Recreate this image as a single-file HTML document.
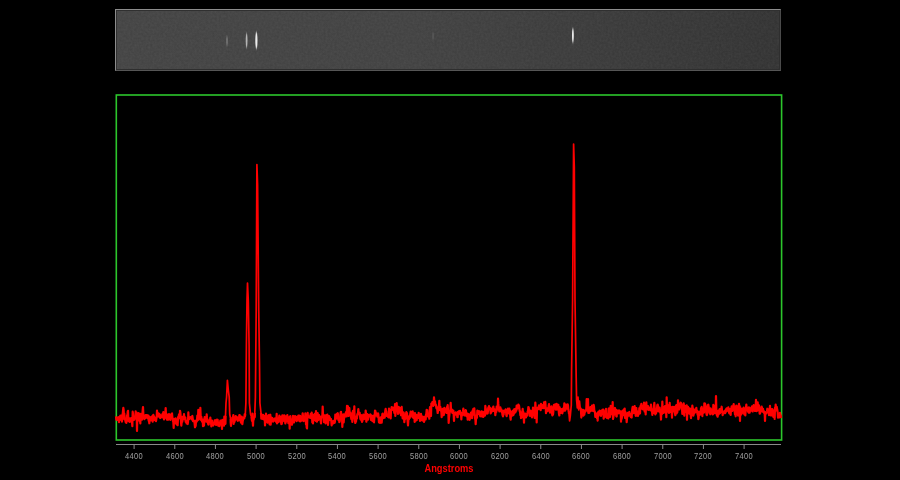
<!DOCTYPE html>
<html><head><meta charset="utf-8"><style>
html,body{margin:0;padding:0;background:#000;width:900px;height:480px;overflow:hidden;}
#strip{position:absolute;left:115px;top:9px;width:666px;height:62px;box-sizing:border-box;
 border-top:1px solid #8c8c8c;border-left:1px solid #8c8c8c;border-right:1px solid #4a4a4a;border-bottom:1px solid #555;
 background:linear-gradient(to right,#414141 0%,#3f3f3f 45%,#373737 75%,#303030 100%);}
#strip .in{position:absolute;left:0;top:0;right:0;bottom:0;border-top:1px solid #303030;border-left:1px solid #303030;border-bottom:1px solid #2e2e2e;border-right:1px solid #2e2e2e;z-index:2;}
.sp{position:absolute;border-radius:50%;background:#fff;filter:blur(0.9px);}
svg{position:absolute;left:0;top:0;}
.lb{position:absolute;top:450.6px;width:40px;text-align:center;font-family:"Liberation Sans",sans-serif;font-size:9.4px;transform:scaleX(0.80);letter-spacing:0.35px;color:#a0a0a0;line-height:10px;}
#ang{position:absolute;left:398.5px;top:462.5px;transform:scaleX(0.93);width:100px;text-align:center;font-family:"Liberation Sans",sans-serif;font-weight:bold;font-size:10px;color:#f00;line-height:12px;}
</style></head><body>
<div id="strip"><div class="in"></div>
<svg width="666" height="62" style="position:absolute;left:-1px;top:-1px">
<defs><filter id="bl" x="-3" y="-1" width="7" height="3"><feGaussianBlur stdDeviation="0.7 1.3"/></filter>
<filter id="nz" x="0" y="0" width="1" height="1"><feTurbulence type="fractalNoise" baseFrequency="0.45" numOctaves="2" seed="3"/><feColorMatrix values="0 0 0 0 1  0 0 0 0 1  0 0 0 0 1  1 0 0 0 0"/></filter></defs>
<rect x="2" y="2" width="662" height="58" filter="url(#nz)" opacity="0.07"/>
<g fill="#fff" filter="url(#bl)">
<ellipse cx="112" cy="32" rx="0.7" ry="5" opacity="0.3"/>
<ellipse cx="131.6" cy="31.5" rx="0.9" ry="7.5" opacity="0.6"/>
<ellipse cx="141.4" cy="31.5" rx="1.1" ry="8.5" opacity="0.9"/>
<ellipse cx="457.9" cy="26.5" rx="0.9" ry="7.5" opacity="0.9"/>
<ellipse cx="318" cy="27" rx="1" ry="4" opacity="0.08"/>
</g></svg>
</div>
<svg width="900" height="480" viewBox="0 0 900 480">
<rect x="116.3" y="95" width="665.3" height="345" fill="none" stroke="#2cc62c" stroke-width="1.6"/>
<g stroke="#8a8a8a" stroke-width="1">
<line x1="116" y1="444.5" x2="781" y2="444.5"/>
<line x1="134.10" y1="444.5" x2="134.10" y2="449" /><line x1="174.77" y1="444.5" x2="174.77" y2="449" /><line x1="215.43" y1="444.5" x2="215.43" y2="449" /><line x1="256.10" y1="444.5" x2="256.10" y2="449" /><line x1="296.77" y1="444.5" x2="296.77" y2="449" /><line x1="337.43" y1="444.5" x2="337.43" y2="449" /><line x1="378.10" y1="444.5" x2="378.10" y2="449" /><line x1="418.77" y1="444.5" x2="418.77" y2="449" /><line x1="459.43" y1="444.5" x2="459.43" y2="449" /><line x1="500.10" y1="444.5" x2="500.10" y2="449" /><line x1="540.77" y1="444.5" x2="540.77" y2="449" /><line x1="581.43" y1="444.5" x2="581.43" y2="449" /><line x1="622.10" y1="444.5" x2="622.10" y2="449" /><line x1="662.77" y1="444.5" x2="662.77" y2="449" /><line x1="703.43" y1="444.5" x2="703.43" y2="449" /><line x1="744.10" y1="444.5" x2="744.10" y2="449" />
</g>
<polyline points="116.00,416.38 116.33,419.64 116.67,419.36 117.00,419.65 117.33,419.91 117.67,419.92 118.00,417.49 118.33,417.22 118.67,418.55 119.00,422.20 119.33,417.17 119.67,418.56 120.00,416.56 120.33,415.56 120.67,416.63 121.00,419.84 121.33,419.79 121.67,418.49 122.00,421.56 122.33,414.49 122.67,414.47 123.00,410.94 123.33,407.79 123.67,410.13 124.00,418.67 124.33,413.61 124.67,419.48 125.00,418.35 125.33,420.22 125.67,422.11 126.00,419.13 126.33,422.81 126.67,420.73 127.00,415.37 127.33,418.84 127.67,411.90 128.00,410.75 128.33,419.08 128.67,421.13 129.00,417.97 129.33,418.27 129.67,421.96 130.00,420.97 130.33,419.79 130.67,418.31 131.00,421.28 131.33,420.20 131.67,417.92 132.00,422.43 132.33,426.15 132.67,411.68 133.00,413.56 133.33,417.53 133.67,417.55 134.00,419.79 134.33,419.71 134.67,418.64 135.00,418.21 135.33,417.27 135.67,411.23 136.00,416.30 136.33,416.77 136.67,412.61 137.00,431.00 137.33,417.03 137.67,417.54 138.00,419.11 138.33,419.80 138.67,413.06 139.00,415.44 139.33,419.76 139.67,421.24 140.00,416.88 140.33,423.49 140.67,413.89 141.00,418.35 141.33,417.31 141.67,415.02 142.00,419.63 142.33,414.68 142.67,410.49 143.00,407.07 143.33,414.09 143.67,415.26 144.00,416.45 144.33,419.16 144.67,416.52 145.00,418.38 145.33,417.19 145.67,415.14 146.00,415.44 146.33,416.81 146.67,415.10 147.00,415.08 147.33,418.13 147.67,415.27 148.00,416.81 148.33,415.57 148.67,420.72 149.00,420.82 149.33,423.28 149.67,416.81 150.00,417.23 150.33,419.93 150.67,420.32 151.00,417.25 151.33,418.10 151.67,416.94 152.00,416.30 152.33,420.13 152.67,421.61 153.00,416.25 153.33,414.86 153.67,418.20 154.00,416.28 154.33,418.31 154.67,420.03 155.00,419.45 155.33,419.09 155.67,418.12 156.00,421.19 156.33,419.16 156.67,416.94 157.00,410.50 157.33,414.35 157.67,416.40 158.00,413.13 158.33,416.34 158.67,415.51 159.00,415.63 159.33,413.84 159.67,417.36 160.00,414.74 160.33,418.03 160.67,417.72 161.00,416.34 161.33,415.77 161.67,415.89 162.00,416.13 162.33,414.11 162.67,417.48 163.00,415.06 163.33,412.03 163.67,415.56 164.00,419.33 164.33,419.02 164.67,414.61 165.00,417.91 165.33,412.91 165.67,408.02 166.00,415.67 166.33,417.58 166.67,414.05 167.00,419.75 167.33,414.76 167.67,419.44 168.00,419.73 168.33,419.36 168.67,415.38 169.00,414.03 169.33,414.56 169.67,415.53 170.00,414.72 170.33,419.96 170.67,414.55 171.00,415.38 171.33,418.19 171.67,413.80 172.00,413.43 172.33,416.86 172.67,418.98 173.00,421.35 173.33,422.23 173.67,427.86 174.00,419.53 174.33,418.91 174.67,419.98 175.00,418.75 175.33,422.14 175.67,418.27 176.00,423.60 176.33,422.53 176.67,420.19 177.00,424.64 177.33,423.90 177.67,425.22 178.00,417.94 178.33,416.58 178.67,418.34 179.00,414.37 179.33,417.76 179.67,418.10 180.00,410.74 180.33,412.32 180.67,415.99 181.00,422.32 181.33,425.54 181.67,422.13 182.00,421.25 182.33,421.63 182.67,416.87 183.00,418.97 183.33,419.24 183.67,418.18 184.00,414.22 184.33,417.79 184.67,419.08 185.00,417.27 185.33,417.41 185.67,421.84 186.00,421.68 186.33,421.55 186.67,423.51 187.00,420.83 187.33,423.72 187.67,423.98 188.00,422.30 188.33,412.44 188.67,418.16 189.00,419.25 189.33,418.83 189.67,417.40 190.00,418.09 190.33,417.17 190.67,418.01 191.00,417.27 191.33,417.23 191.67,419.33 192.00,417.04 192.33,415.97 192.67,418.09 193.00,421.15 193.33,420.32 193.67,420.77 194.00,421.45 194.33,420.91 194.67,423.98 195.00,427.27 195.33,425.46 195.67,425.85 196.00,420.67 196.33,421.79 196.67,421.52 197.00,420.83 197.33,415.69 197.67,420.28 198.00,418.72 198.33,409.74 198.67,419.56 199.00,419.16 199.33,418.04 199.67,417.01 200.00,417.67 200.33,407.80 200.67,416.04 201.00,420.03 201.33,416.89 201.67,420.10 202.00,421.58 202.33,419.42 202.67,419.57 203.00,426.27 203.33,420.00 203.67,425.87 204.00,425.38 204.33,420.67 204.67,417.21 205.00,420.49 205.33,421.13 205.67,417.46 206.00,418.67 206.33,421.71 206.67,414.44 207.00,417.90 207.33,420.21 207.67,422.13 208.00,423.21 208.33,424.46 208.67,424.63 209.00,420.58 209.33,421.62 209.67,419.64 210.00,421.16 210.33,417.68 210.67,421.37 211.00,421.88 211.33,426.48 211.67,422.72 212.00,420.51 212.33,423.95 212.67,424.41 213.00,425.47 213.33,425.56 213.67,424.36 214.00,422.61 214.33,423.86 214.67,420.41 215.00,420.92 215.33,420.19 215.67,422.70 216.00,424.91 216.33,424.85 216.67,422.75 217.00,419.63 217.33,422.49 217.67,419.93 218.00,424.37 218.33,425.66 218.67,425.02 219.00,422.80 219.33,426.24 219.67,424.72 220.00,424.10 220.33,420.70 220.67,423.36 221.00,423.90 221.33,422.61 221.67,421.92 222.00,429.00 222.33,419.90 222.67,420.83 223.00,420.88 223.33,422.94 223.67,421.68 224.00,425.77 224.33,416.52 224.67,416.87 225.00,419.12 225.33,423.87 225.50,416.00" fill="none" stroke="#ff0000" stroke-width="2.2" stroke-linejoin="round"/><polyline points="230.60,419.00 230.67,422.56 231.00,425.89 231.33,421.58 231.67,419.59 232.00,420.41 232.33,417.53 232.67,418.75 233.00,417.42 233.33,415.12 233.67,423.84 234.00,418.03 234.33,422.12 234.67,420.91 235.00,420.02 235.33,419.63 235.67,416.09 236.00,418.31 236.33,416.61 236.67,418.91 237.00,417.04 237.33,419.76 237.67,420.76 238.00,418.87 238.33,419.10 238.67,420.37 239.00,418.01 239.33,415.02 239.67,415.09 240.00,416.64 240.33,420.77 240.67,419.86 241.00,422.61 241.33,421.85 241.67,416.63 242.00,418.84 242.33,424.14 242.67,421.49 243.00,420.06 243.33,417.72 243.67,418.43 244.00,418.56 244.33,418.17 244.67,414.33 245.00,416.37 245.30,414.00" fill="none" stroke="#ff0000" stroke-width="2.2" stroke-linejoin="round"/><polyline points="251.50,417.00 251.67,418.68 252.00,420.93 252.33,413.69 252.67,421.12 253.00,425.70 253.33,418.60 253.67,419.74 254.00,417.10 254.33,417.02 254.67,417.24 254.80,413.00" fill="none" stroke="#ff0000" stroke-width="2.2" stroke-linejoin="round"/><polyline points="261.00,413.00 261.33,418.62 261.67,417.79 262.00,418.45 262.33,415.80 262.67,418.87 263.00,414.74 263.33,419.12 263.67,418.76 264.00,419.48 264.33,415.91 264.67,416.09 265.00,425.42 265.33,419.69 265.67,418.00 266.00,413.58 266.33,419.10 266.67,419.48 267.00,417.59 267.33,422.54 267.67,422.67 268.00,421.23 268.33,415.64 268.67,415.08 269.00,416.98 269.33,419.24 269.67,424.33 270.00,417.09 270.33,414.73 270.67,424.73 271.00,419.83 271.33,417.22 271.67,418.82 272.00,419.26 272.33,418.14 272.67,420.90 273.00,421.65 273.33,419.43 273.67,420.91 274.00,419.07 274.33,420.26 274.67,418.60 275.00,418.44 275.33,418.92 275.67,421.44 276.00,421.67 276.33,422.01 276.67,413.83 277.00,423.45 277.33,418.71 277.67,419.46 278.00,421.89 278.33,422.16 278.67,421.87 279.00,417.80 279.33,415.59 279.67,418.38 280.00,420.64 280.33,416.58 280.67,419.39 281.00,421.69 281.33,424.11 281.67,423.95 282.00,422.70 282.33,415.31 282.67,419.62 283.00,416.78 283.33,415.65 283.67,417.16 284.00,420.87 284.33,415.36 284.67,421.52 285.00,418.51 285.33,423.45 285.67,421.38 286.00,421.83 286.33,416.14 286.67,418.75 287.00,418.89 287.33,415.09 287.67,420.75 288.00,418.28 288.33,423.21 288.67,420.38 289.00,419.30 289.33,417.09 289.67,428.68 290.00,416.50 290.33,416.09 290.67,421.95 291.00,422.10 291.33,421.32 291.67,424.30 292.00,424.72 292.33,419.37 292.67,420.35 293.00,415.74 293.33,420.03 293.67,419.95 294.00,422.50 294.33,417.99 294.67,418.96 295.00,415.99 295.33,419.05 295.67,420.24 296.00,419.40 296.33,416.74 296.67,421.05 297.00,420.65 297.33,418.18 297.67,416.73 298.00,418.09 298.33,415.69 298.67,416.21 299.00,415.58 299.33,421.04 299.67,418.96 300.00,415.74 300.33,421.36 300.67,419.29 301.00,420.70 301.33,416.66 301.67,420.57 302.00,416.62 302.33,416.66 302.67,413.23 303.00,416.04 303.33,420.30 303.67,421.07 304.00,419.44 304.33,417.61 304.67,418.55 305.00,419.48 305.33,413.37 305.67,418.09 306.00,424.52 306.33,420.00 306.67,427.46 307.00,428.46 307.33,418.14 307.67,412.73 308.00,417.28 308.33,417.05 308.67,416.25 309.00,416.64 309.33,417.30 309.67,417.56 310.00,417.00 310.33,416.01 310.67,413.87 311.00,418.25 311.33,415.16 311.67,412.54 312.00,415.22 312.33,422.46 312.67,420.52 313.00,423.31 313.33,418.93 313.67,414.93 314.00,419.34 314.33,419.86 314.67,413.90 315.00,419.82 315.33,420.20 315.67,420.83 316.00,411.15 316.33,416.69 316.67,420.46 317.00,421.70 317.33,419.19 317.67,413.07 318.00,417.02 318.33,420.00 318.67,415.90 319.00,415.12 319.33,419.17 319.67,416.56 320.00,416.89 320.33,417.33 320.67,420.66 321.00,423.39 321.33,416.41 321.67,416.72 322.00,416.83 322.33,416.50 322.67,406.48 323.00,414.61 323.33,417.24 323.67,418.45 324.00,422.05 324.33,417.96 324.67,415.32 325.00,421.97 325.33,420.28 325.67,423.36 326.00,419.74 326.33,415.12 326.67,417.09 327.00,416.01 327.33,414.65 327.67,418.16 328.00,424.96 328.33,421.55 328.67,417.62 329.00,416.12 329.33,419.80 329.67,417.17 330.00,418.67 330.33,419.32 330.67,419.99 331.00,418.99 331.33,421.63 331.67,425.28 332.00,423.00 332.33,421.34 332.67,422.18 333.00,423.50 333.33,423.28 333.67,420.76 334.00,421.29 334.33,421.68 334.67,422.77 335.00,421.00 335.33,414.61 335.67,415.26 336.00,417.21 336.33,418.65 336.67,416.24 337.00,413.85 337.33,413.58 337.67,413.18 338.00,414.30 338.33,419.99 338.67,418.34 339.00,418.35 339.33,422.05 339.67,421.54 340.00,419.07 340.33,417.64 340.67,412.18 341.00,411.84 341.33,415.88 341.67,416.01 342.00,415.82 342.33,426.85 342.67,419.95 343.00,421.34 343.33,414.47 343.67,422.35 344.00,418.68 344.33,417.00 344.67,417.02 345.00,415.10 345.33,413.79 345.67,413.72 346.00,412.09 346.33,412.26 346.67,416.45 347.00,405.84 347.33,409.20 347.67,412.60 348.00,406.25 348.33,415.37 348.67,415.88 349.00,409.96 349.33,408.07 349.67,412.86 350.00,412.70 350.33,412.69 350.67,414.02 351.00,417.30 351.33,419.07 351.67,417.38 352.00,416.49 352.33,421.90 352.67,412.25 353.00,410.77 353.33,412.69 353.67,412.15 354.00,414.31 354.33,406.23 354.67,418.74 355.00,420.85 355.33,422.97 355.67,418.70 356.00,421.67 356.33,418.00 356.67,416.25 357.00,418.45 357.33,414.06 357.67,414.89 358.00,412.82 358.33,409.22 358.67,412.77 359.00,413.16 359.33,413.90 359.67,412.81 360.00,415.72 360.33,418.82 360.67,419.51 361.00,415.89 361.33,415.19 361.67,419.85 362.00,421.84 362.33,421.27 362.67,416.71 363.00,416.80 363.33,414.60 363.67,415.35 364.00,419.08 364.33,417.00 364.67,418.59 365.00,416.82 365.33,416.33 365.67,410.64 366.00,413.03 366.33,421.73 366.67,419.43 367.00,414.03 367.33,414.02 367.67,418.85 368.00,419.73 368.33,417.22 368.67,416.89 369.00,415.22 369.33,416.47 369.67,415.03 370.00,416.35 370.33,414.39 370.67,414.88 371.00,419.99 371.33,419.86 371.67,415.62 372.00,416.79 372.33,420.97 372.67,421.21 373.00,419.12 373.33,420.11 373.67,415.49 374.00,422.32 374.33,417.85 374.67,416.62 375.00,410.72 375.33,410.97 375.67,412.41 376.00,415.37 376.33,415.29 376.67,415.48 377.00,413.77 377.33,416.61 377.67,415.62 378.00,413.27 378.33,414.29 378.67,418.79 379.00,422.36 379.33,421.03 379.67,420.45 380.00,422.80 380.33,418.31 380.67,417.35 381.00,421.93 381.33,420.10 381.67,422.68 382.00,418.59 382.33,414.14 382.67,413.55 383.00,414.88 383.33,418.07 383.67,415.24 384.00,415.64 384.33,416.18 384.67,417.68 385.00,413.77 385.33,410.40 385.67,408.81 386.00,411.38 386.33,411.30 386.67,415.90 387.00,415.29 387.33,414.98 387.67,416.22 388.00,416.85 388.33,414.42 388.67,417.36 389.00,408.65 389.33,411.24 389.67,411.32 390.00,410.09 390.33,412.40 390.67,418.43 391.00,411.37 391.33,409.63 391.67,407.18 392.00,410.11 392.33,409.74 392.67,409.10 393.00,407.62 393.33,407.88 393.67,409.48 394.00,410.32 394.33,412.81 394.67,412.69 395.00,404.00 395.33,416.00 395.67,411.52 396.00,409.00 396.33,406.20 396.67,403.09 397.00,409.03 397.33,410.51 397.67,407.90 398.00,413.97 398.33,412.94 398.67,406.75 399.00,408.83 399.33,411.38 399.67,412.17 400.00,408.08 400.33,412.60 400.67,413.69 401.00,415.25 401.33,409.59 401.67,406.92 402.00,411.89 402.33,415.14 402.67,418.34 403.00,417.28 403.33,412.33 403.67,412.55 404.00,415.67 404.33,422.19 404.67,418.81 405.00,416.96 405.33,418.82 405.67,416.38 406.00,413.89 406.33,412.18 406.67,415.06 407.00,413.14 407.33,416.47 407.67,421.73 408.00,425.33 408.33,420.93 408.67,416.69 409.00,419.12 409.33,416.86 409.67,418.09 410.00,416.01 410.33,413.70 410.67,411.58 411.00,415.12 411.33,414.42 411.67,415.33 412.00,415.89 412.33,416.77 412.67,411.43 413.00,415.36 413.33,417.89 413.67,413.15 414.00,414.82 414.33,413.75 414.67,421.94 415.00,413.17 415.33,415.87 415.67,420.67 416.00,416.68 416.33,414.97 416.67,420.11 417.00,415.11 417.33,415.57 417.67,417.26 418.00,418.05 418.33,417.11 418.67,412.95 419.00,415.95 419.33,417.51 419.67,416.93 420.00,420.95 420.33,417.71 420.67,420.27 421.00,413.87 421.33,417.55 421.67,416.56 422.00,420.05 422.33,419.52 422.67,416.66 423.00,420.68 423.33,416.82 423.67,420.56 424.00,421.82 424.33,420.93 424.67,418.77 425.00,417.73 425.33,416.30 425.67,419.32 426.00,414.69 426.33,413.74 426.67,409.89 427.00,410.94 427.33,410.23 427.67,415.61 428.00,416.45 428.33,415.58 428.67,417.08 429.00,415.86 429.33,418.76 429.67,413.66 430.00,407.07 430.33,415.22 430.67,414.16 431.00,415.88 431.33,403.53 431.67,404.55 432.00,404.05 432.33,402.19 432.67,404.55 433.00,402.13 433.33,405.85 433.67,402.90 434.00,397.26 434.33,401.64 434.67,402.68 435.00,401.36 435.33,404.88 435.67,404.38 436.00,405.34 436.33,407.81 436.67,408.74 437.00,407.23 437.33,410.23 437.67,413.00 438.00,411.05 438.33,408.02 438.67,407.48 439.00,404.76 439.33,400.76 439.67,408.98 440.00,410.16 440.33,406.89 440.67,408.83 441.00,410.35 441.33,411.95 441.67,417.22 442.00,414.04 442.33,413.73 442.67,408.82 443.00,410.89 443.33,412.09 443.67,415.19 444.00,413.88 444.33,407.84 444.67,408.38 445.00,409.86 445.33,412.18 445.67,409.76 446.00,409.52 446.33,412.15 446.67,412.98 447.00,407.06 447.33,408.02 447.67,405.19 448.00,410.35 448.33,412.18 448.67,422.96 449.00,417.80 449.33,415.28 449.67,412.49 450.00,411.36 450.33,409.75 450.67,402.78 451.00,409.66 451.33,411.35 451.67,409.77 452.00,409.67 452.33,412.85 452.67,412.35 453.00,410.63 453.33,410.57 453.67,414.63 454.00,420.88 454.33,414.37 454.67,415.45 455.00,414.31 455.33,412.83 455.67,412.29 456.00,414.09 456.33,413.16 456.67,414.08 457.00,413.85 457.33,417.23 457.67,417.20 458.00,411.77 458.33,413.98 458.67,411.34 459.00,412.70 459.33,410.99 459.67,412.55 460.00,410.82 460.33,414.52 460.67,412.35 461.00,412.90 461.33,419.37 461.67,413.90 462.00,415.63 462.33,414.65 462.67,413.03 463.00,411.49 463.33,408.53 463.67,412.61 464.00,412.78 464.33,415.36 464.67,412.53 465.00,415.43 465.33,412.93 465.67,410.13 466.00,410.71 466.33,415.76 466.67,416.12 467.00,415.60 467.33,413.72 467.67,419.65 468.00,413.76 468.33,416.91 468.67,416.85 469.00,419.27 469.33,419.52 469.67,419.73 470.00,416.97 470.33,413.93 470.67,415.66 471.00,412.60 471.33,414.41 471.67,416.42 472.00,418.11 472.33,411.95 472.67,410.47 473.00,411.40 473.33,408.90 473.67,413.08 474.00,414.73 474.33,408.35 474.67,413.60 475.00,418.91 475.33,418.21 475.67,424.12 476.00,419.11 476.33,418.68 476.67,415.62 477.00,417.76 477.33,410.48 477.67,413.91 478.00,414.16 478.33,413.77 478.67,413.88 479.00,411.21 479.33,412.47 479.67,413.46 480.00,415.36 480.33,416.28 480.67,416.18 481.00,414.51 481.33,411.37 481.67,411.37 482.00,413.08 482.33,416.71 482.67,414.59 483.00,411.88 483.33,416.93 483.67,414.60 484.00,413.83 484.33,415.45 484.67,412.17 485.00,415.58 485.33,405.87 485.67,408.38 486.00,412.14 486.33,411.73 486.67,409.54 487.00,413.66 487.33,410.27 487.67,413.34 488.00,410.86 488.33,407.44 488.67,409.20 489.00,406.12 489.33,407.45 489.67,407.86 490.00,407.79 490.33,409.15 490.67,413.40 491.00,412.61 491.33,409.40 491.67,409.53 492.00,411.46 492.33,409.15 492.67,407.90 493.00,407.80 493.33,406.56 493.67,410.88 494.00,410.15 494.33,409.98 494.67,409.50 495.00,410.41 495.33,415.15 495.67,411.85 496.00,410.91 496.33,411.98 496.67,406.55 497.00,408.88 497.33,409.70 497.67,409.47 498.00,398.69 498.33,403.91 498.67,407.44 499.00,409.56 499.33,411.35 499.67,409.91 500.00,411.04 500.33,407.24 500.67,409.40 501.00,410.66 501.33,409.20 501.67,412.14 502.00,410.56 502.33,414.11 502.67,415.49 503.00,416.39 503.33,414.38 503.67,414.30 504.00,410.49 504.33,411.71 504.67,411.54 505.00,411.30 505.33,411.33 505.67,409.32 506.00,410.86 506.33,415.24 506.67,416.23 507.00,411.72 507.33,411.35 507.67,412.37 508.00,408.60 508.33,408.91 508.67,411.89 509.00,413.21 509.33,408.56 509.67,414.29 510.00,410.39 510.33,417.23 510.67,419.61 511.00,413.85 511.33,411.74 511.67,416.04 512.00,413.71 512.33,411.54 512.67,413.70 513.00,410.63 513.33,415.03 513.67,412.00 514.00,413.70 514.33,409.13 514.67,409.44 515.00,410.39 515.33,412.43 515.67,410.91 516.00,408.53 516.33,410.65 516.67,405.68 517.00,407.24 517.33,408.76 517.67,407.67 518.00,406.86 518.33,404.60 518.67,407.46 519.00,405.32 519.33,407.85 519.67,411.02 520.00,411.08 520.33,415.06 520.67,412.27 521.00,418.08 521.33,417.73 521.67,417.72 522.00,414.71 522.33,412.01 522.67,408.92 523.00,414.24 523.33,412.00 523.67,414.67 524.00,422.66 524.33,414.40 524.67,415.37 525.00,417.01 525.33,413.61 525.67,414.90 526.00,417.42 526.33,415.42 526.67,413.90 527.00,414.07 527.33,415.54 527.67,411.25 528.00,411.45 528.33,406.98 528.67,407.48 529.00,409.51 529.33,411.94 529.67,412.38 530.00,415.96 530.33,411.05 530.67,410.57 531.00,411.43 531.33,412.87 531.67,412.91 532.00,417.30 532.33,414.53 532.67,413.35 533.00,407.62 533.33,414.36 533.67,412.63 534.00,413.53 534.33,414.77 534.67,417.95 535.00,412.86 535.33,402.67 535.67,407.10 536.00,407.92 536.33,408.78 536.67,422.35 537.00,409.06 537.33,408.21 537.67,408.58 538.00,409.30 538.33,407.12 538.67,408.20 539.00,405.40 539.33,407.43 539.67,408.01 540.00,409.16 540.33,406.20 540.67,410.10 541.00,403.79 541.33,407.07 541.67,405.41 542.00,408.06 542.33,405.84 542.67,405.11 543.00,405.82 543.33,406.23 543.67,408.11 544.00,402.34 544.33,407.29 544.67,403.53 545.00,406.38 545.33,401.95 545.67,407.44 546.00,413.23 546.33,409.15 546.67,410.92 547.00,410.81 547.33,411.05 547.67,408.07 548.00,408.94 548.33,409.88 548.67,405.71 549.00,404.19 549.33,411.07 549.67,410.81 550.00,412.55 550.33,407.55 550.67,407.16 551.00,409.40 551.33,406.32 551.67,409.45 552.00,413.61 552.33,415.34 552.67,412.69 553.00,414.53 553.33,411.94 553.67,405.92 554.00,404.84 554.33,407.67 554.67,407.69 555.00,407.88 555.33,404.40 555.67,409.35 556.00,409.70 556.33,408.65 556.67,403.87 557.00,407.95 557.33,405.91 557.67,409.32 558.00,406.62 558.33,404.94 558.67,410.62 559.00,414.00 559.33,415.38 559.67,407.43 560.00,410.85 560.33,409.98 560.67,409.04 561.00,412.82 561.33,411.18 561.67,410.04 562.00,409.03 562.33,413.28 562.67,411.50 563.00,410.91 563.33,410.77 563.67,407.63 564.00,409.98 564.33,403.42 564.67,409.47 565.00,410.69 565.33,410.12 565.67,407.57 566.00,404.51 566.33,406.39 566.67,407.52 567.00,408.69 567.33,406.50 567.67,404.28 568.00,405.43 568.33,409.25 568.67,410.99 569.00,414.00" fill="none" stroke="#ff0000" stroke-width="2.2" stroke-linejoin="round"/><polyline points="580.30,409.00 580.33,408.01 580.67,409.42 581.00,411.27 581.33,417.53 581.67,409.68 582.00,410.43 582.33,411.33 582.67,412.31 583.00,409.79 583.33,415.66 583.67,410.45 584.00,410.30 584.33,414.57 584.67,411.80 585.00,410.77 585.33,411.82 585.67,410.37 586.00,410.53 586.33,408.54 586.67,399.00 587.00,403.08 587.33,407.46 587.67,410.98 588.00,399.00 588.33,412.88 588.67,412.36 589.00,412.82 589.33,412.55 589.67,409.75 590.00,409.38 590.33,407.14 590.67,410.25 591.00,410.74 591.33,410.49 591.67,410.29 592.00,405.66 592.33,408.21 592.67,410.54 593.00,410.80 593.33,409.21 593.67,404.86 594.00,406.69 594.33,411.30 594.67,411.38 595.00,412.70 595.33,416.84 595.67,414.07 596.00,413.97 596.33,413.68 596.67,413.68 597.00,418.19 597.33,415.65 597.67,420.56 598.00,412.34 598.33,416.26 598.67,411.50 599.00,413.60 599.33,414.79 599.67,410.54 600.00,413.62 600.33,410.86 600.67,414.81 601.00,415.86 601.33,413.73 601.67,413.75 602.00,411.93 602.33,409.80 602.67,412.71 603.00,414.38 603.33,409.66 603.67,418.71 604.00,411.03 604.33,415.68 604.67,416.83 605.00,413.96 605.33,411.41 605.67,411.80 606.00,408.78 606.33,416.85 606.67,417.70 607.00,417.99 607.33,414.35 607.67,416.68 608.00,416.18 608.33,418.43 608.67,408.61 609.00,408.35 609.33,410.64 609.67,411.06 610.00,416.92 610.33,411.70 610.67,405.83 611.00,407.25 611.33,407.03 611.67,407.69 612.00,412.79 612.33,414.43 612.67,402.00 613.00,419.01 613.33,417.57 613.67,414.32 614.00,415.04 614.33,414.41 614.67,411.00 615.00,407.98 615.33,410.61 615.67,411.51 616.00,409.90 616.33,416.18 616.67,416.54 617.00,410.29 617.33,412.79 617.67,412.32 618.00,412.05 618.33,412.59 618.67,413.31 619.00,410.45 619.33,413.04 619.67,411.81 620.00,413.10 620.33,411.43 620.67,411.33 621.00,421.76 621.33,415.23 621.67,418.96 622.00,416.26 622.33,414.41 622.67,410.54 623.00,412.27 623.33,412.79 623.67,415.04 624.00,409.45 624.33,413.02 624.67,408.65 625.00,418.02 625.33,411.88 625.67,416.33 626.00,413.59 626.33,416.68 626.67,422.25 627.00,418.38 627.33,416.55 627.67,412.75 628.00,413.46 628.33,413.24 628.67,415.67 629.00,412.73 629.33,411.95 629.67,414.98 630.00,414.96 630.33,414.05 630.67,416.78 631.00,417.12 631.33,416.30 631.67,417.53 632.00,411.60 632.33,408.64 632.67,406.87 633.00,411.72 633.33,413.16 633.67,411.57 634.00,409.37 634.33,408.66 634.67,406.20 635.00,413.02 635.33,411.29 635.67,415.78 636.00,409.69 636.33,408.17 636.67,415.58 637.00,411.11 637.33,412.34 637.67,411.71 638.00,415.88 638.33,414.19 638.67,413.39 639.00,413.84 639.33,408.17 639.67,412.40 640.00,413.40 640.33,407.26 640.67,405.68 641.00,406.59 641.33,403.80 641.67,405.84 642.00,408.55 642.33,406.06 642.67,406.82 643.00,409.38 643.33,407.54 643.67,408.11 644.00,402.71 644.33,408.07 644.67,411.52 645.00,409.08 645.33,409.14 645.67,414.34 646.00,404.82 646.33,402.27 646.67,408.65 647.00,407.50 647.33,409.09 647.67,408.98 648.00,406.08 648.33,409.92 648.67,409.38 649.00,407.55 649.33,409.65 649.67,408.36 650.00,408.01 650.33,409.13 650.67,410.33 651.00,404.66 651.33,409.07 651.67,408.94 652.00,410.55 652.33,414.92 652.67,411.08 653.00,411.26 653.33,413.04 653.67,409.28 654.00,405.77 654.33,402.96 654.67,407.21 655.00,411.27 655.33,414.45 655.67,411.83 656.00,413.17 656.33,412.47 656.67,409.33 657.00,408.64 657.33,404.97 657.67,404.64 658.00,405.96 658.33,411.09 658.67,410.23 659.00,409.46 659.33,411.57 659.67,407.71 660.00,410.41 660.33,411.82 660.67,414.45 661.00,419.57 661.33,411.45 661.67,410.34 662.00,413.97 662.33,401.52 662.67,409.29 663.00,408.55 663.33,412.84 663.67,407.22 664.00,406.93 664.33,408.18 664.67,409.14 665.00,406.06 665.33,412.58 665.67,411.84 666.00,408.74 666.33,417.14 666.67,397.32 667.00,408.31 667.33,406.86 667.67,406.22 668.00,405.38 668.33,411.78 668.67,408.45 669.00,412.87 669.33,408.70 669.67,402.89 670.00,408.65 670.33,406.90 670.67,408.54 671.00,412.19 671.33,410.10 671.67,411.92 672.00,417.60 672.33,406.91 672.67,411.19 673.00,407.86 673.33,407.66 673.67,409.29 674.00,406.75 674.33,411.79 674.67,411.81 675.00,413.62 675.33,415.22 675.67,411.72 676.00,405.94 676.33,405.06 676.67,413.47 677.00,410.80 677.33,412.09 677.67,408.02 678.00,400.24 678.33,406.15 678.67,406.87 679.00,408.16 679.33,409.46 679.67,408.10 680.00,403.71 680.33,407.53 680.67,402.49 681.00,403.04 681.33,404.45 681.67,407.51 682.00,408.18 682.33,413.84 682.67,409.56 683.00,409.56 683.33,406.82 683.67,403.33 684.00,408.77 684.33,415.66 684.67,406.04 685.00,405.84 685.33,408.01 685.67,411.95 686.00,409.16 686.33,407.92 686.67,405.44 687.00,419.82 687.33,410.75 687.67,408.63 688.00,406.87 688.33,411.92 688.67,411.41 689.00,412.56 689.33,413.67 689.67,408.40 690.00,410.02 690.33,408.74 690.67,414.44 691.00,418.11 691.33,413.05 691.67,411.31 692.00,411.99 692.33,405.60 692.67,407.79 693.00,412.46 693.33,415.70 693.67,414.08 694.00,409.62 694.33,413.40 694.67,412.63 695.00,411.54 695.33,411.09 695.67,409.07 696.00,410.64 696.33,407.80 696.67,412.28 697.00,410.67 697.33,412.77 697.67,414.77 698.00,414.30 698.33,419.10 698.67,418.02 699.00,411.66 699.33,413.87 699.67,415.04 700.00,412.87 700.33,413.50 700.67,414.27 701.00,408.12 701.33,409.18 701.67,406.89 702.00,409.50 702.33,416.06 702.67,410.50 703.00,409.18 703.33,408.63 703.67,408.42 704.00,412.57 704.33,403.31 704.67,406.86 705.00,403.67 705.33,406.39 705.67,407.63 706.00,410.47 706.33,413.09 706.67,414.78 707.00,415.00 707.33,411.29 707.67,405.09 708.00,405.43 708.33,404.65 708.67,406.62 709.00,408.32 709.33,411.77 709.67,413.25 710.00,411.94 710.33,414.28 710.67,408.41 711.00,409.24 711.33,409.64 711.67,412.29 712.00,411.73 712.33,411.69 712.67,414.38 713.00,414.12 713.33,404.85 713.67,409.22 714.00,405.94 714.33,408.71 714.67,413.20 715.00,409.31 715.33,405.78 715.67,411.02 716.00,396.00 716.33,410.20 716.67,414.72 717.00,415.67 717.33,414.68 717.67,416.76 718.00,410.89 718.33,413.29 718.67,414.42 719.00,410.63 719.33,410.84 719.67,409.02 720.00,413.16 720.33,408.84 720.67,411.89 721.00,408.61 721.33,410.08 721.67,406.72 722.00,410.54 722.33,410.76 722.67,415.20 723.00,412.47 723.33,412.42 723.67,412.11 724.00,413.08 724.33,412.13 724.67,411.24 725.00,413.26 725.33,412.94 725.67,409.79 726.00,409.17 726.33,411.32 726.67,408.30 727.00,410.76 727.33,408.79 727.67,409.35 728.00,408.96 728.33,407.31 728.67,409.99 729.00,412.36 729.33,413.26 729.67,409.14 730.00,410.17 730.33,409.73 730.67,414.90 731.00,408.71 731.33,409.39 731.67,406.27 732.00,406.80 732.33,410.83 732.67,409.65 733.00,408.51 733.33,405.97 733.67,404.15 734.00,408.37 734.33,406.41 734.67,411.68 735.00,414.40 735.33,411.38 735.67,416.28 736.00,408.71 736.33,405.50 736.67,406.00 737.00,408.10 737.33,409.06 737.67,410.13 738.00,415.53 738.33,406.65 738.67,405.95 739.00,403.82 739.33,409.66 739.67,406.04 740.00,421.00 740.33,407.38 740.67,412.44 741.00,414.78 741.33,413.66 741.67,413.77 742.00,412.25 742.33,408.94 742.67,412.43 743.00,412.62 743.33,409.49 743.67,407.60 744.00,412.17 744.33,414.27 744.67,414.12 745.00,411.74 745.33,415.33 745.67,410.14 746.00,407.63 746.33,404.60 746.67,408.51 747.00,410.05 747.33,409.73 747.67,407.79 748.00,411.75 748.33,410.82 748.67,412.66 749.00,407.36 749.33,408.05 749.67,412.72 750.00,409.54 750.33,409.77 750.67,408.41 751.00,408.00 751.33,410.58 751.67,407.34 752.00,406.36 752.33,408.07 752.67,411.52 753.00,409.35 753.33,410.04 753.67,405.21 754.00,407.53 754.33,406.27 754.67,408.89 755.00,410.97 755.33,407.70 755.67,405.96 756.00,399.81 756.33,411.09 756.67,410.81 757.00,407.16 757.33,410.62 757.67,402.24 758.00,407.78 758.33,408.67 758.67,408.89 759.00,405.41 759.33,408.08 759.67,413.68 760.00,413.54 760.33,411.19 760.67,409.23 761.00,408.55 761.33,408.37 761.67,406.52 762.00,409.56 762.33,411.66 762.67,411.61 763.00,408.72 763.33,411.50 763.67,410.81 764.00,412.93 764.33,411.85 764.67,413.32 765.00,421.00 765.33,412.67 765.67,412.27 766.00,413.05 766.33,413.42 766.67,412.81 767.00,411.23 767.33,408.72 767.67,409.95 768.00,410.44 768.33,409.25 768.67,410.03 769.00,415.13 769.33,413.84 769.67,408.86 770.00,405.95 770.33,414.56 770.67,415.29 771.00,412.43 771.33,409.42 771.67,415.47 772.00,413.82 772.33,409.19 772.67,410.19 773.00,413.98 773.33,416.80 773.67,416.33 774.00,410.30 774.33,413.41 774.67,418.91 775.00,407.80 775.33,408.59 775.67,404.71 776.00,407.27 776.33,410.41 776.67,406.84 777.00,408.40 777.33,409.91 777.67,412.33 778.00,417.65 778.33,413.51 778.67,413.49 779.00,413.52 779.33,417.48 779.67,416.55 780.00,412.86 780.33,415.41 780.67,415.22 781.00,418.20" fill="none" stroke="#ff0000" stroke-width="2.2" stroke-linejoin="round"/><polyline points="225.33,423.87 225.50,416.00 226.00,403.00 226.60,397.00 227.40,380.30 228.30,390.00 229.20,397.00 229.70,414.00 230.60,419.00" fill="none" stroke="#ff0000" stroke-width="1.7" stroke-linejoin="round"/><polyline points="245.00,416.37 245.30,414.00 245.90,403.00 246.40,346.00 247.00,300.00 247.50,283.00 248.30,301.00 249.10,346.00 249.40,403.00 250.50,414.00 251.50,417.00" fill="none" stroke="#ff0000" stroke-width="1.7" stroke-linejoin="round"/><polyline points="254.67,417.24 254.80,413.00 255.40,397.00 256.20,310.00 256.90,164.50 257.60,185.00 258.70,310.00 259.50,363.00 259.90,403.00 261.00,413.00" fill="none" stroke="#ff0000" stroke-width="1.7" stroke-linejoin="round"/><polyline points="568.67,410.99 569.00,414.00 569.60,421.00 570.30,416.00 571.30,405.00 571.60,369.00 572.60,300.00 573.60,144.00 574.30,167.00 575.00,300.00 576.20,378.00 576.60,400.00 577.30,408.00 578.00,397.00 578.70,410.00 579.50,401.00 580.30,409.00" fill="none" stroke="#ff0000" stroke-width="1.7" stroke-linejoin="round"/>
</svg>
<div class="lb" style="left:114.10px">4400</div><div class="lb" style="left:154.77px">4600</div><div class="lb" style="left:195.43px">4800</div><div class="lb" style="left:236.10px">5000</div><div class="lb" style="left:276.77px">5200</div><div class="lb" style="left:317.43px">5400</div><div class="lb" style="left:358.10px">5600</div><div class="lb" style="left:398.77px">5800</div><div class="lb" style="left:439.43px">6000</div><div class="lb" style="left:480.10px">6200</div><div class="lb" style="left:520.77px">6400</div><div class="lb" style="left:561.43px">6600</div><div class="lb" style="left:602.10px">6800</div><div class="lb" style="left:642.77px">7000</div><div class="lb" style="left:683.43px">7200</div><div class="lb" style="left:724.10px">7400</div>
<div id="ang">Angstroms</div>
</body></html>
